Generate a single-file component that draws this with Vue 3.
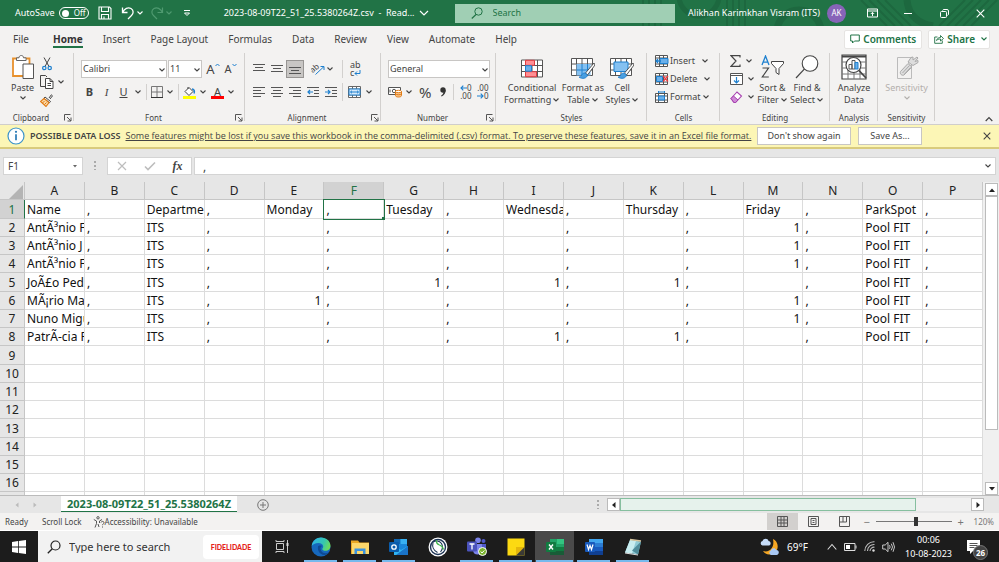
<script setup>
import { h } from 'vue'

const lines = (rows) => rows.map(([x1, x2, y]) => `<path d="M${x1} ${y}.5H${x2}" stroke="#555"/>`).join('')
const chevron = (color) => `<path d="M1.500 2.500 4 5l2.500-2.500" fill="none" stroke="${color}" stroke-width="1.100"/>`
const gridLines = '<path d="M.5.5h21v17H.5zM.5 6h21M.5 12h21M5.500.5v17M11 .5v17M16.500.5v17" fill="#fff" stroke="#555"/>'
const brush = '<path d="M23 5 14.500 15l2 2L24 7z" fill="#fff" stroke="#444" stroke-width=".9"/><path d="M14 15c-2 0-3 1-3.500 2.500-.4 1-1.500 1.500-2.500 1.500 3 2.500 8 1.500 8.500-2z" fill="#4a9fe0" stroke="#1979ca" stroke-width=".8"/>'

const icons = {
  chev: [8, 8, chevron('#444')],
  chevW: [8, 8, chevron('#fff')],
  chevDim: [8, 8, chevron('#4f9a70')],
  chevG: [8, 8, chevron('#217346')],
  chevOff: [8, 8, chevron('#b3b0ad')],
  save: [14, 14, '<path d="M1 1h10.500L13 2.500V13H1z M3.500 1v4.500h7V1 M3.500 13V8.500h7V13 M6 10.500V13" fill="none" stroke="#fff" stroke-width="1.100"/>'],
  undo: [14, 14, '<path d="M1.500 1.500v5h5M1.500 6.500C3.500 2.500 7 .8 10 2.500c3 1.800 2.500 5 .5 7L7 13" fill="none" stroke="#fff" stroke-width="1.300"/>'],
  redo: [14, 14, '<path d="M12.500 1.500v5h-5M12.500 6.500C10.500 2.500 7 .8 4 2.500c-3 1.800-2.500 5-.5 7L7 13" fill="none" stroke="#4f9a70" stroke-width="1.200"/>'],
  chevBig: [10, 10, '<path d="M1 3l4 4 4-4" fill="none" stroke="#fff" stroke-width="1.200"/>'],
  more: [8, 8, '<path d="M1 1.500h6M1.500 4 4 6.500 6.500 4z" fill="none" stroke="#fff"/>'],
  lens: [12, 12, '<circle cx="7.500" cy="4.500" r="3.700" fill="none" stroke="#217346"/><path d="M5 7.500.8 11.500" stroke="#217346" stroke-width="1.200"/>'],
  ribbonOpt: [11, 10, '<path d="M.5 1h10v8H.5zM.5 3h10M5.500 8V4.500M3.800 6l1.700-1.700L7.200 6" fill="none" stroke="#fff"/>'],
  min: [8, 8, '<path d="M0 4.500h8" stroke="#fff"/>'],
  restore: [9, 9, '<rect x=".5" y="2.500" width="6" height="6" rx="1" fill="none" stroke="#fff"/><path d="M2.500 1.500Q3 .5 4 .5h3Q8.500.5 8.500 2v3q0 1-1 1.500" fill="none" stroke="#fff"/>'],
  close: [9, 9, '<path d="M.7.7l7.600 7.600M8.300.7.7 8.300" stroke="#fff" stroke-width="1.100"/>'],
  comment: [10, 10, '<path d="M.7 1h8.600v6H4.500L2.500 9V7H.7z" fill="none" stroke="#217346"/>'],
  share: [10, 10, '<path d="M3.500 3H.7v6.300h7.600V6.500M2.500 6.500C3 4.500 4.500 3.500 6.500 3.500V1.500l3 3-3 2.500V5C4.500 5 3.500 5.500 2.500 6.500z" fill="none" stroke="#217346" stroke-width=".9"/>'],
  paste: [22, 24, '<path d="M1 3.500h16.500V21H1z" fill="#fff" stroke="#e8912d" stroke-width="1.800"/><path d="M4.500 5.500V2.800H7C7 1.300 8 .5 9.300.5s2.200.8 2.200 2.300h2.600v2.700z" fill="#fff" stroke="#666"/><path d="M11 9h10.500v14.500H11z" fill="#fff" stroke="#555"/>'],
  cut: [10, 14, '<path d="M2 .5l5 9M8 .5l-5 9" stroke="#444" fill="none"/><circle cx="2.300" cy="11" r="1.700" fill="none" stroke="#1e80cf" stroke-width="1.200"/><circle cx="7.700" cy="11" r="1.700" fill="none" stroke="#1e80cf" stroke-width="1.200"/>'],
  copy: [14, 14, '<path d="M5 11.500H.5V.5h5L7 2" fill="none" stroke="#444"/><path d="M5.500 3.500h4.500l3 3v7H5.500zM10 3.500v3h3M7.500 8.500h3.500M7.500 10.500h3.500" fill="#fff" stroke="#444"/>'],
  painter: [13, 13, '<path d="M9 4 11.300.8l1.200 1L10 5" fill="#fff" stroke="#444"/><path d="M5 3l5.500 4.500-1 1.200L4 4.300z" fill="#fff" stroke="#444"/><path d="M4 4.500.5 7.500l5.500 5 3-4z" fill="#fbd9a5" stroke="#e07b16" stroke-width="1.100"/><path d="M2.500 8.500l2-1M4.500 10.500l2-2" stroke="#e07b16"/>'],
  launcher: [8, 8, '<path d="M.5 6.500v-6h6M3 3l4 4M7 3.500V7H3.500" fill="none" stroke="#555"/>'],
  borders: [12, 12, '<path d="M.5.5h11v11H.5zM6 .5v11M.5 6h11" fill="none" stroke="#777"/><path d="M0 11.500h12" stroke="#333"/>'],
  fill: [13, 13, '<path d="M2 5.500 6 1.500l4 4-4 4z" fill="#fff" stroke="#444"/><path d="M5 3V1" stroke="#444"/><path d="M9 3c2 0 3 2 2 4.500" fill="none" stroke="#1e80cf" stroke-width="1.500"/><path d="M0 10h13v3H0z" fill="#ff0"/>'],
  alignTop: [12, 12, lines([[0, 12, 1], [2, 10, 4], [0, 12, 7]])],
  alignMid: [12, 12, lines([[0, 12, 2], [2, 10, 5], [0, 12, 8]])],
  alignBot: [12, 12, lines([[0, 12, 4], [2, 10, 7], [0, 12, 10]])],
  left: [12, 12, lines([[0, 12, 1], [0, 8, 4], [0, 12, 7], [0, 8, 10]])],
  center: [12, 12, lines([[0, 12, 1], [2, 10, 4], [0, 12, 7], [2, 10, 10]])],
  right: [12, 12, lines([[0, 12, 1], [4, 12, 4], [0, 12, 7], [4, 12, 10]])],
  outdent: [12, 12, lines([[0, 12, 1], [7, 12, 4], [7, 12, 7], [0, 12, 10]]) + '<path d="M6 6H1M3 4 1 6l2 2" fill="none" stroke="#1e80cf" stroke-width="1.200"/>'],
  indent: [12, 12, lines([[0, 12, 1], [7, 12, 4], [7, 12, 7], [0, 12, 10]]) + '<path d="M0 6h5M3 4l2 2-2 2" fill="none" stroke="#1e80cf" stroke-width="1.200"/>'],
  merge: [13, 12, '<path d="M.5.5h12v11H.5zM.5 3h12M.5 9h12M4.500.5V3M8.500.5V3M4.500 9v2.500M8.500 9v2.500" fill="#fff" stroke="#666"/><path d="M1 3h11v6H1z" fill="#d6eafa" stroke="#1e80cf"/><path d="M2.500 6h8M4 4.700 2.500 6 4 7.300M9 4.700 10.500 6 9 7.300" fill="none" stroke="#1e80cf"/>'],
  currency: [15, 12, '<path d="M.5 1.500h12v7H.5z" fill="#fff" stroke="#555"/><circle cx="6" cy="5" r="1.700" fill="none" stroke="#555"/><path d="M2 3.500v3" stroke="#555"/><path d="M7.500 5.500v4c0 2 6 2 6 0v-4z" fill="#f9c58c" stroke="#e07b16"/><ellipse cx="10.500" cy="5.500" rx="3" ry="1.200" fill="#fff" stroke="#e07b16"/><path d="M7.500 8c1 1 5 1 6 0" fill="none" stroke="#e07b16"/>'],
  comma: [8, 10, '<circle cx="4" cy="3" r="2.700" fill="#333"/><path d="M6.700 3c0 3-1.200 5-4 6.500L2 8.800C4 7.500 4.500 6 4.500 4z" fill="#333"/>'],
  arrowL: [7, 6, '<path d="M7 3H1M3.300.7 1 3l2.300 2.300" fill="none" stroke="#1e80cf" stroke-width="1.100"/>'],
  arrowR: [7, 6, '<path d="M0 3h6M3.700.7 6 3 3.700 5.300" fill="none" stroke="#1e80cf" stroke-width="1.100"/>'],
  condFormat: [22, 18, gridLines + '<path d="M4.500.8h9v5h-9zM4.500 12.200h11v5h-11z" fill="#ff8f94" stroke="#e23b40"/><path d="M4.500 6.200h6v5.500h-6z" fill="#6bb0ea" stroke="#1e80cf"/>'],
  formatTable: [24, 21, gridLines + '<path d="M5.500 6h14v11.500h-14z" fill="#85c1f1"/><path d="M5.500 12h14M11 6v11.500M16.500 6v11.500" stroke="#1e80cf"/>' + brush],
  cellStyles: [24, 21, gridLines + '<path d="M4 4h14v9.500H4z" fill="#85c1f1" stroke="#1e80cf"/>' + brush],
  insert: [14, 12, '<path d="M.5.5h12v11H.5zM4.500.5v11M8.500.5v11M.5 3h12M.5 9h12" fill="#fff" stroke="#555"/><path d="M5 3.500h8v5H5z" fill="#6bb0ea" stroke="#1e80cf"/><path d="M6 6H1M3 4 1 6l2 2" fill="none" stroke="#1e80cf" stroke-width="1.300"/>'],
  delete: [14, 12, '<path d="M.5.5h12v11H.5zM4.500.5v11M8.500.5v11M.5 3h12M.5 9h12" fill="#fff" stroke="#555"/><path d="M1.500 3.500h6v5h-6z" fill="#6bb0ea" stroke="#1e80cf"/><path d="M8 3l5 5.500M13 3 8 8.500" stroke="#f04045" stroke-width="1.300"/>'],
  format: [14, 12, '<path d="M.5 2.500h12v9H.5zM3.500 2.500v9M9.500 2.500v9M.5 5h12M.5 9h12" fill="#fff" stroke="#555"/><path d="M3.500 5h6v4h-6z" fill="#6bb0ea" stroke="#1e80cf"/><path d="M3.500 1h6M3.500 0v2M9.500 0v2" stroke="#1e80cf"/>'],
  sum: [11, 12, '<path d="M10 2.500V.7H1L6 6l-5 5.300h9V9.500" fill="none" stroke="#444" stroke-width="1.200"/>'],
  fillDown: [13, 12, '<path d="M.5.500h12v11H.5zM.5 2.500h12" fill="#fff" stroke="#555"/><path d="M6.500 4v6M4 7.500 6.500 10 9 7.500" fill="none" stroke="#1e80cf" stroke-width="1.200"/>'],
  clear: [13, 12, '<path d="M1 7.500 7 1l4.500 4-6 6.500H4z" fill="#fff" stroke="#a742b0" stroke-width="1.100"/><path d="M1 7.500 3.500 5 8 9l-2.500 2.500H4z" fill="#cf8ad6" stroke="#a742b0"/>'],
  sort: [24, 24, '<path d="M1 10 4.500 1 8 10M2.200 7.200h4.600" fill="none" stroke="#1e80cf" stroke-width="1.300"/><path d="M1.500 13h6L1.300 22h6.500" fill="none" stroke="#444" stroke-width="1.200"/><path d="M10.500 6.500h12v2l-4.500 5v6l-3-2v-4l-4.500-5z" fill="#fff" stroke="#444"/>'],
  find: [24, 24, '<circle cx="15" cy="8.500" r="7.800" fill="#fff" stroke="#444" stroke-width="1.100"/><path d="M9.300 14.200 1 23" stroke="#444" stroke-width="1.200"/>'],
  analyze: [26, 26, '<path d="M1 1h24v24H1z" fill="#fff" stroke="#444" stroke-width="1.200"/><path d="M1 2.500h24" stroke="#444" stroke-width="2"/><path d="M1 8h24M1 14h24M1 20h24M7 14v11M13 14v11M19 14v11" stroke="#777"/><circle cx="12.500" cy="11" r="7.500" fill="#fff" stroke="#444" stroke-width="1.200"/><path d="M18 16.500 25 24" stroke="#444" stroke-width="1.800"/><path d="M8 10.500h3v4.500H8zM11 6.500h3V15h-3z" fill="#fff" stroke="#555"/><path d="M14 8.500h3V15h-3z" fill="#6bb0ea" stroke="#1e80cf"/>'],
  sensitivity: [24, 26, '<path d="M2.500 3.500h14V24.500h-14z" fill="#f3f2f1" stroke="#bbb"/><path d="M5.500 17.500 13 9.500l4 3.500-8 8c-2 1-4.500-1-3.500-3.500z" fill="#ddd" stroke="#aaa"/><path d="M7.500 19l7-7.500M9.500 20l6-6.500" stroke="#aaa"/><path d="M13 8l3-4.500 2-.5V6l4-3 1 1-3 3.500 3-1v2l-5 3z" fill="#ddd" stroke="#aaa"/>'],
  collapse: [8, 6, '<path d="M.7 5 4 1.500 7.300 5" fill="none" stroke="#444" stroke-width="1.200"/>'],
  info: [18, 18, '<circle cx="9" cy="9" r="8" fill="#fff" stroke="#3c93c9" stroke-width="1.200"/><circle cx="9" cy="4.800" r="1.100" fill="#2a7ab5"/><path d="M9 7.200v6" stroke="#2a7ab5" stroke-width="1.700"/>'],
  closeDark: [8, 8, '<path d="M.7.7l6.600 6.600M7.300.7.7 7.300" stroke="#444" stroke-width="1.100"/>'],
  cancel: [10, 10, '<path d="M1 1l8 8M9 1 1 9" stroke="#bdbdbd" stroke-width="1.200"/>'],
  accept: [12, 10, '<path d="M1 5.500 4 8.500 11 1.500" fill="none" stroke="#bdbdbd" stroke-width="1.600"/>'],
  caret: [6, 6, '<path d="M1 2h4L3 4.500z" fill="#666"/>'],
  corner: [14, 14, '<path d="M14 0v14H0z" fill="#b4b4b4"/>'],
  navL: [6, 6, '<path d="M4.500.5v5L1.500 3z" fill="#bbb"/>'],
  navR: [6, 6, '<path d="M1.500.5v5L4.500 3z" fill="#bbb"/>'],
  add: [12, 12, '<circle cx="6" cy="6" r="5.300" fill="none" stroke="#777"/><path d="M6 3v6M3 6h6" stroke="#777"/>'],
  up: [8, 6, '<path d="M1 5h6L4 1.500z" fill="#222"/>'],
  down: [8, 6, '<path d="M1 1h6L4 4.500z" fill="#222"/>'],
  triL: [6, 8, '<path d="M4.500 1v6L1 4z" fill="#222"/>'],
  triR: [6, 8, '<path d="M1.500 1v6L5 4z" fill="#222"/>'],
  access: [12, 12, '<circle cx="5" cy="1.800" r="1.200" fill="none" stroke="#555"/><path d="M.8 3.500 3.500 5v2.500L2 11.500M9 3.500 6.500 5v2M5 8l1 3" fill="none" stroke="#555"/><path d="M8 6.500c.3-1.500 3-1.500 3 .2 0 1.200-1.500 1.200-1.500 2.500M9.500 10.500v1" fill="none" stroke="#555"/>'],
  normal: [11, 11, '<path d="M.5.500h10v10H.5zM4 .5v10M7 .5v10M.5 4h10M.5 7h10" fill="none" stroke="#555"/>'],
  layout: [11, 11, '<path d="M.5.500h10v10H.5zM3 2.500h5v6H3zM4.500 4.500h2M4.500 6.500h2" fill="none" stroke="#555"/>'],
  breaks: [11, 11, '<path d="M.5 10.500V.5h10v10zM4 .5v5.500M7.500.5V6H.5" fill="none" stroke="#555"/>'],
  windows: [14, 14, '<path d="M0 2l6-.9v5.500H0zM6.800 1 14 0v6.600H6.800zM0 7.400h6V13L0 12zM6.800 7.400H14V14l-7.200-1z" fill="#fff"/>'],
  lensDark: [14, 14, '<circle cx="8.500" cy="5.500" r="4.500" fill="none" stroke="#222" stroke-width="1.200"/><path d="M5.300 8.700.8 13.200" stroke="#222" stroke-width="1.300"/>'],
  taskview: [14, 13, '<path d="M1.500 3.500h7v6h-7zM1 0v1.500h8V0M1 13v-1.500h8V13M12.500 0v3M12.500 6v7" fill="none" stroke="#ccc"/><path d="M11.500 3h2v3h-2z" fill="#ddd"/>'],
  edge: [20, 20, '<defs><linearGradient id="eg" x1="0" x2="1" y1=".3" y2=".6"><stop offset="0" stop-color="#2fb4e8"/><stop offset=".6" stop-color="#35c6b0"/><stop offset="1" stop-color="#6fdc55"/></linearGradient></defs><circle cx="10" cy="10" r="9.500" fill="#1668bd"/><path d="M.6 9C1.500 3.500 5.500.5 10 .5c5.500 0 9.500 4 9.500 8.300 0 3-2.200 5-5 5-2 0-3.200-.8-3.200-1.800 0-.8.900-1 .9-2.500C12.200 7.500 10 6 7.500 6 4 6 1.500 7.500.6 9z" fill="url(#eg)"/><path d="M7 9.500C6.300 14 9 17.500 13 18c2 .2 4-1 5-2.500-3.500 1.500-8 .5-8.500-3.500-.2-1.500.5-2.500 1.500-3-1.500-.8-3.500-.5-4 .5z" fill="#0e4a94"/>'],
  explorer: [18, 16, '<path d="M0 1.500h7l1.500 2H18V15H0z" fill="#e9a825"/><path d="M1 4h17v11H1z" fill="#fbd76b"/><path d="M3.500 15V9.500h11V15H12v-3H6v3z" fill="#3c93dd"/>'],
  outlook: [20, 18, '<path d="M5 1h13v14H5z" fill="#1a86d8"/><path d="M5 1h6.500v5H5z" fill="#1068b4"/><path d="M11.500 1H18v5h-6.500z" fill="#38b0f0"/><path d="M5 8l7 4 7-4v9H5z" fill="#30b4f2"/><path d="M19 8v9H7z" fill="#1a74c8"/><rect y="4" width="10" height="10" rx="1" fill="#0a5cab"/><circle cx="5" cy="9" r="2.200" fill="none" stroke="#fff" stroke-width="1.300"/>'],
  coin: [20, 20, '<circle cx="10" cy="10" r="9.500" fill="#fff"/><circle cx="10" cy="10" r="7.500" fill="none" stroke="#1c3455" stroke-width="1.400"/><path d="M5 5.500C7 3 11.500 3.500 13.500 6.500c1.500 2.500 1 6-1 8.500M5 6c-1 3.500.5 7.500 4.500 9.500" fill="none" stroke="#1c3455" stroke-width="1.100"/><path d="M8.500 3c-.5 2.500.5 4 3 5 2.500.8 3.500 2.500 4 4.500" fill="none" stroke="#3fb54a" stroke-width="1.200"/>'],
  teams: [20, 19, '<circle cx="11" cy="3.200" r="2.800" fill="#7b83eb"/><circle cx="16.500" cy="4" r="2" fill="#5059c9"/><path d="M13 7h6v5c0 2-2 3.500-4 3z" fill="#5059c9"/><path d="M6 7h9v6c0 3-2 4.500-4.500 4.500S6 16 6 13z" fill="#7b83eb"/><rect y="4.500" width="10" height="10" rx="1" fill="#4b53bc"/><path d="M2.500 7h5M5 7v5.500" stroke="#fff" stroke-width="1.300"/><circle cx="15.500" cy="14.500" r="4" fill="#7bb32e" stroke="#fff"/><path d="M13.700 14.500 15 16l2.300-2.500" fill="none" stroke="#fff"/>'],
  sticky: [18, 18, '<path d="M.5.5h17v17H.5z" fill="#fcd912"/><path d="M9 17.500V9h8.500z" fill="#e5b70b"/><path d="M17.500 9v8.500H9z" fill="#3b3a35"/>'],
  excel: [18, 18, '<path d="M4 1h14v16H4z" fill="#21a366"/><path d="M11 1h7v5h-7z" fill="#33c481"/><path d="M4 9h14v8H4z" fill="#107c41"/><path d="M4 13h14v4H4z" fill="#185c37"/><rect y="4" width="10" height="10" rx="1" fill="#107c41"/><path d="M3 6.500 7 11.500M7 6.500 3 11.500" stroke="#fff" stroke-width="1.400"/>'],
  word: [18, 18, '<path d="M4 1h14v4.500H4z" fill="#41a5ee"/><path d="M4 5h14v4H4z" fill="#2b7cd3"/><path d="M4 9h14v4H4z" fill="#185abd"/><path d="M4 13h14v4H4z" fill="#103f91"/><rect y="4" width="10" height="10" rx="1" fill="#185abd"/><path d="M2 6.500 3.500 11.500 5 7.500l1.500 4L8 6.500" fill="none" stroke="#fff" stroke-width="1.200"/>'],
  notepad: [20, 18, '<path d="M7 2 18 3.500 15 16.500 2 14.500z" fill="#8fcbd6"/><path d="M7 2l6 .8L9 15.500l-7-1z" fill="#c8edf0"/><path d="M15 16.500 18 3.500l-9 9z" fill="#4f8c9a"/><path d="M7 1.500l11 1.500" stroke="#d9c7a0" stroke-width="1.500"/><path d="M2 15l13 2" stroke="#ddd"/>'],
  weather: [20, 18, '<path d="M13 1c5 2 6 9 3 12-3 4-10 5-13 0 6 2 12-3 10-12z" fill="#f6a723"/><path d="M2.500 7.500a2.300 2.300 0 010-4.500C3.500 0 8 0 8.500 3c2.500 0 3 4 .5 4.500z" fill="#c5dcf9"/><path d="M11 17a2.500 2.500 0 010-4.700c.5-2.800 4.500-2.800 5.200-.3 3.300-.2 3.600 4.600.3 5z" fill="#a9c9f5"/>'],
  trayUp: [10, 8, '<path d="M.7 6.500 5 1.500l4.300 5" fill="none" stroke="#ddd" stroke-width="1.100"/>'],
  battery: [13, 8, '<path d="M.5.500h10.500v7H.5zM12 2.500v3" fill="none" stroke="#ddd"/><path d="M2 2h4v4H2z" fill="#fff"/>'],
  wifi: [11, 11, '<path d="M.8 10A9.200 9.200 0 0110.500.8M3.500 10A6.500 6.500 0 0110.500 3.500M6 10A4 4 0 0110.500 6.200" fill="none" stroke="#bbb" stroke-width="1.100"/><circle cx="9.500" cy="9.500" r="1.200" fill="#ddd"/>'],
  sound: [13, 12, '<path d="M.7 4h2.500L6 1.300v9.400L3.200 8H.7zM7.500 4.200q1.300 1.800 0 3.600M9.300 2.700q2.400 3.300 0 6.600M11 1.200q3 4.800 0 9.600" fill="none" stroke="#ddd" stroke-width=".9"/>'],
  notes: [14, 14, '<path d="M0 0h13v11H6l-3 3v-3H0z" fill="#fff"/><path d="M2.500 3.500h8M2.500 5.500h8M2.500 7.500h5" stroke="#555"/>'],
}

const Icon = ({ name }) => {
  const [w, ht, body] = icons[name]
  return h('svg', { width: w, height: ht, viewBox: `0 0 ${w} ${ht}`, 'aria-hidden': 'true', innerHTML: body })
}
Icon.props = ['name']

const tabs = ['File', 'Home', 'Insert', 'Page Layout', 'Formulas', 'Data', 'Review', 'View', 'Automate', 'Help']
const columns = 'ABCDEFGHIJKLMNOP'.split('')
const header = { A: 'Name', C: 'Departmen', E: 'Monday', G: 'Tuesday', I: 'Wednesda', K: 'Thursday', M: 'Friday', O: 'ParkSpot' }
const people = [
  ['AntÃ³nio F', 'M'], ['AntÃ³nio J', 'M'], ['AntÃ³nio F', 'M'], ['JoÃ£o Ped', 'GIK'],
  ['MÃ¡rio Ma', 'EM'], ['Nuno Migu', 'M'], ['PatrÃ-cia F', 'IK'],
]

const rows = Array.from({ length: 17 }, (_, i) => {
  const person = people[i - 1]
  return columns.map((c, ci) => {
    if (i > 7) return ''
    if (ci % 2) return ','
    if (i === 0) return header[c]
    if (c === 'A') return person[0]
    if (c === 'C') return 'ITS'
    if (c === 'O') return 'Pool FIT'
    return person[1].includes(c) ? '1' : ''
  })
})

const apps = [
  ['edge', 'Edge', true], ['explorer', 'File Explorer', true], ['outlook', 'Outlook', true], ['coin', 'Client', false],
  ['teams', 'Teams', true], ['sticky', 'Sticky Notes', true], ['excel', 'Excel', true], ['word', 'Word', true], ['notepad', 'Notepad', true],
]
</script>

<template>
  <div class="window">
    <header class="titlebar">
      <svg class="pattern" viewBox="0 0 360 26" width="360" height="26" aria-hidden="true">
        <g stroke="#1d683f" stroke-width="2" fill="none">
          <path d="M4 0v26M10 0v26M16 0v26M22 0v26M88 0v26M94 0v26M100 0v26M106 0v26" />
          <path d="M222 0l26 26M230 0l26 26M238 0l26 26M246 0l26 26M300 26l26-26M308 26l26-26M316 26l26-26M324 26l26-26M332 26l26-26" />
          <circle cx="160" cy="32" r="22" stroke-width="7" /><circle cx="60" cy="-4" r="20" stroke-width="5" />
          <path d="M268 0q2 22 26 26" stroke-width="7" />
        </g>
      </svg>
      <span class="autosave">AutoSave</span>
      <button class="toggle" aria-label="AutoSave off"><i></i>Off</button>
      <button class="t-save" aria-label="Save"><Icon name="save" /></button>
      <button class="t-undo" aria-label="Undo"><Icon name="undo" /><Icon name="chevW" /></button>
      <button class="t-redo" aria-label="Redo"><Icon name="redo" /><Icon name="chevDim" /></button>
      <button class="t-more" aria-label="Customize toolbar"><Icon name="more" /></button>
      <span class="doc">2023-08-09T22_51_25.5380264Z.csv &nbsp;-&nbsp; Read...</span>
      <Icon name="chevBig" />
      <label class="search"><Icon name="lens" /><input type="search" placeholder="Search" aria-label="Search" /></label>
      <div class="account">
        <span>Alikhan Karimkhan Visram (ITS)</span><span class="avatar">AK</span>
      </div>
      <div class="wincontrols">
        <button aria-label="Ribbon display options"><Icon name="ribbonOpt" /></button>
        <button aria-label="Minimize"><Icon name="min" /></button>
        <button aria-label="Restore"><Icon name="restore" /></button>
        <button aria-label="Close"><Icon name="close" /></button>
      </div>
    </header>

    <nav class="tabs">
      <button v-for="t in tabs" :key="t" :class="{ active: t === 'Home' }">{{ t }}</button>
      <div class="tabactions">
        <button><Icon name="comment" />Comments</button>
        <button><Icon name="share" />Share<Icon name="chevG" class="sharechev" /></button>
      </div>
    </nav>

    <section class="ribbon">
      <div class="group clipboard">
        <div class="body">
          <button class="big"><Icon name="paste" /><span>Paste</span><Icon name="chev" /></button>
          <div class="stack">
            <button class="cut" aria-label="Cut"><Icon name="cut" /></button>
            <button aria-label="Copy"><Icon name="copy" /><Icon name="chev" /></button>
            <button aria-label="Format painter"><Icon name="painter" /></button>
          </div>
        </div>
        <footer>Clipboard<Icon name="launcher" class="launcher" /></footer>
      </div>

      <div class="group font">
        <div class="body two">
          <div class="line">
            <div class="combo name"><select aria-label="Font"><option>Calibri</option></select><Icon name="chev" /></div>
            <div class="combo size"><select aria-label="Font size"><option>11</option></select><Icon name="chev" /></div>
            <button class="grow" aria-label="Increase font size">A<svg width="5" height="4" viewBox="0 0 5 4"><path d="M.5 3 2.500 1l2 2" fill="none" stroke="#1e80cf" /></svg></button>
            <button class="grow small" aria-label="Decrease font size">A<svg width="5" height="4" viewBox="0 0 5 4"><path d="M.5 1 2.500 3l2-2" fill="none" stroke="#1e80cf" /></svg></button>
          </div>
          <div class="line fmt">
            <button class="ltr"><b>B</b></button><button class="ltr"><i>I</i></button>
            <button class="ltr"><u>U</u></button><Icon name="chev" class="lead" /><hr />
            <button aria-label="Borders"><Icon name="borders" /><Icon name="chev" /></button><hr />
            <button aria-label="Fill color"><Icon name="fill" /><Icon name="chev" /></button>
            <button aria-label="Font color"><span class="fontcolor">A</span><Icon name="chev" /></button>
          </div>
        </div>
        <footer>Font<Icon name="launcher" class="launcher" /></footer>
      </div>

      <div class="group align">
        <div class="body aligngrid">
          <button aria-label="Top align"><Icon name="alignTop" /></button>
          <button aria-label="Middle align"><Icon name="alignMid" /></button>
          <button class="on" aria-label="Bottom align"><Icon name="alignBot" /></button>
          <button class="orient" aria-label="Orientation"><svg width="14" height="12" viewBox="0 0 14 12"><text x="0" y="8" font-size="8" transform="rotate(-40 4 7)" fill="#444">ab</text><path d="M4.500 11.500 13 3.500M9.500 3.500H13V7" fill="none" stroke="#1e80cf" /></svg><Icon name="chev" /></button>
          <button class="last wrap" aria-label="Wrap text">ab<br />c<svg width="7" height="6" viewBox="0 0 7 6"><path d="M6 0v3.500H1M3 1.500l-2 2 2 2" fill="none" stroke="#1e80cf" /></svg></button>
          <button aria-label="Left"><Icon name="left" /></button>
          <button aria-label="Center"><Icon name="center" /></button>
          <button aria-label="Right"><Icon name="right" /></button>
          <button aria-label="Outdent"><Icon name="outdent" /></button>
          <button aria-label="Indent"><Icon name="indent" /></button>
          <button class="last" aria-label="Merge and center"><Icon name="merge" /><Icon name="chev" /></button>
        </div>
        <footer>Alignment<Icon name="launcher" class="launcher" /></footer>
      </div>

      <div class="group number">
        <div class="body two">
          <div class="line"><div class="combo fmtname"><select aria-label="Number format"><option>General</option></select><Icon name="chev" /></div></div>
          <div class="line num">
            <button aria-label="Accounting format"><Icon name="currency" /><Icon name="chev" /></button>
            <button class="pct">%</button>
            <button aria-label="Comma style"><Icon name="comma" /></button><hr />
            <button class="dec" aria-label="Increase decimal"><span><Icon name="arrowL" />0</span><span>.00</span></button>
            <button class="dec" aria-label="Decrease decimal"><span>.00</span><span><Icon name="arrowR" />0</span></button>
          </div>
        </div>
        <footer>Number<Icon name="launcher" class="launcher" /></footer>
      </div>

      <div class="group styles">
        <div class="body bigs">
          <button class="big"><Icon name="condFormat" /><span>Conditional</span><span>Formatting<Icon name="chev" /></span></button>
          <button class="big"><Icon name="formatTable" /><span>Format as</span><span>Table<Icon name="chev" /></span></button>
          <button class="big"><Icon name="cellStyles" /><span>Cell</span><span>Styles<Icon name="chev" /></span></button>
        </div>
        <footer>Styles</footer>
      </div>

      <div class="group cells">
        <div class="body stack">
          <button><Icon name="insert" />Insert<Icon name="chev" class="gap" /></button>
          <button><Icon name="delete" />Delete<Icon name="chev" class="gap" /></button>
          <button><Icon name="format" />Format<Icon name="chev" /></button>
        </div>
        <footer>Cells</footer>
      </div>

      <div class="group editing">
        <div class="body">
          <div class="stack">
            <button aria-label="AutoSum"><Icon name="sum" /><Icon name="chev" /></button>
            <button aria-label="Fill"><Icon name="fillDown" /><Icon name="chev" /></button>
            <button aria-label="Clear"><Icon name="clear" /><Icon name="chev" /></button>
          </div>
          <button class="big"><Icon name="sort" /><span>Sort &amp;</span><span>Filter<Icon name="chev" /></span></button>
          <button class="big"><Icon name="find" /><span>Find &amp;</span><span>Select<Icon name="chev" /></span></button>
        </div>
        <footer>Editing</footer>
      </div>

      <div class="group single">
        <div class="body"><button class="big"><Icon name="analyze" /><span>Analyze</span><span>Data</span></button></div>
        <footer>Analysis</footer>
      </div>
      <div class="group single">
        <div class="body"><button class="big dim"><Icon name="sensitivity" /><span>Sensitivity</span><Icon name="chevOff" /></button></div>
        <footer>Sensitivity</footer>
      </div>
      <div class="tail"><button aria-label="Collapse ribbon"><Icon name="collapse" /></button></div>
    </section>

    <section class="message">
      <Icon name="info" />
      <strong>POSSIBLE DATA LOSS</strong>
      <a href="#">Some features might be lost if you save this workbook in the comma-delimited (.csv) format. To preserve these features, save it in an Excel file format.</a>
      <button class="msgbtn wide">Don't show again</button>
      <button class="msgbtn">Save As...</button>
      <button class="msgclose" aria-label="Close message"><Icon name="closeDark" /></button>
    </section>

    <section class="formula">
      <label class="namebox"><input value="F1" aria-label="Name box" /><Icon name="caret" /></label>
      <span class="dots"></span>
      <div class="fx">
        <button aria-label="Cancel"><Icon name="cancel" /></button>
        <button aria-label="Enter"><Icon name="accept" /></button>
        <button class="fxi" aria-label="Insert function">fx</button>
      </div>
      <label class="fxinput"><input value="," aria-label="Formula" /><Icon name="chev" /></label>
    </section>

    <main class="sheet">
      <div class="viewport">
        <table>
          <thead>
            <tr><th class="corner"><Icon name="corner" /></th><th v-for="c in columns" :key="c" :class="{ sel: c === 'F' }">{{ c }}</th></tr>
          </thead>
          <tbody>
            <tr v-for="(r, i) in rows" :key="i">
              <th :class="{ sel: i === 0 }">{{ i < 16 ? i + 1 : '' }}</th>
              <td v-for="(v, c) in r" :key="c" :class="{ num: v === '1', picked: i === 0 && c === 5 }">{{ v }}</td>
            </tr>
          </tbody>
        </table>
      </div>
      <div class="vscroll">
        <button aria-label="Scroll up"><Icon name="up" /></button>
        <div class="vthumb"></div>
        <div class="vtrack"></div>
        <button aria-label="Scroll down"><Icon name="down" /></button>
      </div>
    </main>

    <section class="sheettabs">
      <button class="nav" aria-label="Previous sheet"><Icon name="navL" /></button>
      <button class="nav" aria-label="Next sheet"><Icon name="navR" /></button>
      <button class="sheettab">2023-08-09T22_51_25.5380264Z</button>
      <button class="addsheet" aria-label="New sheet"><Icon name="add" /></button>
      <span class="dots"></span>
      <div class="hscroll">
        <button aria-label="Scroll left"><Icon name="triL" /></button>
        <div class="hthumb"></div>
        <div class="htrack"></div>
        <button aria-label="Scroll right"><Icon name="triR" /></button>
      </div>
    </section>

    <section class="status">
      <span>Ready</span><span class="lock">Scroll Lock</span><Icon name="access" /><span>Accessibility: Unavailable</span>
      <div class="views">
        <button class="on" aria-label="Normal"><Icon name="normal" /></button>
        <button aria-label="Page layout"><Icon name="layout" /></button>
        <button aria-label="Page break preview"><Icon name="breaks" /></button>
      </div>
      <button class="zb" aria-label="Zoom out">−</button>
      <input class="zoom" type="range" min="0" max="100" value="53" aria-label="Zoom" />
      <button class="zb" aria-label="Zoom in">+</button>
      <span class="pctlabel">120%</span>
    </section>

    <footer class="taskbar">
      <button class="start" aria-label="Start"><Icon name="windows" /></button>
      <label class="tsearch"><Icon name="lensDark" /><input placeholder="Type here to search" aria-label="Type here to search" /><span class="brand">FIDELIDADE</span></label>
      <button class="app" aria-label="Task view"><Icon name="taskview" /></button>
      <button v-for="[n, label, open] in apps" :key="n" class="app" :class="{ open, current: n === 'excel' }" :aria-label="label"><Icon :name="n" /></button>
      <div class="tray">
        <Icon name="weather" /><span class="temp">69°F</span>
        <Icon name="trayUp" /><Icon name="battery" /><Icon name="wifi" /><Icon name="sound" />
        <div class="clock"><span>00:06</span><span>10-08-2023</span></div>
        <button class="notif" aria-label="Notifications"><Icon name="notes" /><b>26</b></button>
      </div>
    </footer>
  </div>
</template>

<style>
body { margin: 0; background: #e6e6e6; }
</style>

<style scoped>
* { box-sizing: border-box; }
.window { height: 100vh; min-width: 960px; display: flex; flex-direction: column; overflow: hidden; font: 10px/12px "Noto Sans", sans-serif; color: #444; }
button { font: inherit; color: inherit; background: none; border: 0; padding: 0; display: flex; align-items: center; justify-content: center; white-space: nowrap; }
input, select { font: inherit; color: inherit; border: 0; background: none; padding: 0; min-width: 0; outline: 0; appearance: none; }
svg { flex: none; display: block; }

.titlebar { position: relative; flex: none; height: 26px; background: #217346; color: #fff; display: flex; align-items: center; font-size: 9px; padding-left: 15px; }
.titlebar > * { position: relative; flex: none; }
.titlebar > .pattern { position: absolute; right: 0; top: 0; }
.toggle { width: 30px; height: 12px; margin-left: 4px; border: 1px solid #fff; border-radius: 6px; font-size: 8px; gap: 5px; }
.toggle i { width: 7px; height: 7px; border-radius: 50%; background: #fff; }
.t-save { margin-left: 9px; }
.t-undo { margin-left: 9px; gap: 1px; }
.t-redo { margin-left: 6px; gap: 1px; }
.t-more { margin-left: 10px; }
.doc { margin-left: 33px; }
.doc + svg { margin-left: 4px; }
.titlebar .search { flex: 1 1 0; max-width: 220px; margin-left: 26px; height: 19px; background: #a0cfb4; display: flex; align-items: center; padding-left: 16px; gap: 10px; }
.search input::placeholder { color: #217346; opacity: 1; }
.titlebar .account { margin-left: auto; display: flex; align-items: center; gap: 7px; }
.avatar { width: 19px; height: 19px; border-radius: 50%; background: #8764b8; display: grid; place-items: center; font-size: 8px; }
.wincontrols { display: flex; width: 153px; padding-left: 8px; }
.wincontrols button { flex: 1; height: 26px; }

.tabs { flex: none; height: 26px; background: #f3f2f1; display: flex; align-items: center; padding: 0 9px 0 13px; gap: 20px; }
.tabs > button { position: relative; height: 26px; }
.tabs > button:first-child { margin-right: 4px; }
.tabs > .active { font-weight: 700; color: #333; }
.tabs > .active::after { content: ""; position: absolute; left: 0; right: 0; bottom: 4px; height: 2px; background: #217346; }
.tabactions { margin-left: auto; display: flex; gap: 6px; }
.tabactions button { height: 19px; padding: 0 5px; gap: 3px; background: #fff; border: 1px solid #e6e4e2; border-radius: 2px; color: #217346; font-weight: 600; }
.tabactions button:last-child { padding-right: 1px; }
.tabactions .sharechev { margin-left: 2px; }

.ribbon { flex: none; height: 73px; background: #f3f2f1; border-bottom: 1px solid #d0cecc; display: grid; grid-template-columns: 74fr 171fr 136fr 115fr 151fr 73fr 110fr 48fr 57fr 64fr; }
.group { min-width: 0; position: relative; display: flex; flex-direction: column; }
.group::after { content: ""; position: absolute; right: 0; top: 1px; bottom: 3px; width: 1px; background: #d2d0ce; }
.body { flex: 1; display: flex; min-height: 0; }
.group footer { position: relative; height: 12px; font-size: 8px; text-align: center; padding-right: 12px; }
.launcher { position: absolute; right: 2px; top: 2px; }
.styles footer, .cells footer, .editing footer, .single footer { padding-right: 0; }
.big { flex-direction: column; justify-content: flex-start; font-size: 9px; }
.big > svg:first-child { margin-bottom: 3px; }
.big span { display: flex; align-items: center; height: 12px; gap: 1px; }
.stack { display: flex; flex-direction: column; }
.stack button { height: 18px; justify-content: flex-start; gap: 3px; }
.clipboard .body { padding: 3px 0 0 11px; gap: 6px; }
.stack .cut { padding-left: 2px; }
.two { flex-direction: column; padding: 8px 6px 0 7px; gap: 5px; }
.line { display: flex; align-items: center; height: 18px; }
.combo { position: relative; height: 18px; background: #fff; border: 1px solid #c8c6c4; display: flex; }
.combo select { flex: 1; padding-left: 1px; font-size: 9px; }
.combo svg { position: absolute; right: 0; top: 5px; pointer-events: none; }
.name { flex: 87; margin-right: 1px; }
.size { flex: 33; margin-right: 2px; }
.grow { font-size: 13px; width: 18px; align-items: flex-start; }
.grow.small { font-size: 11px; width: 17px; }
.fmt { font-size: 11px; }
.ltr { width: 17px; }
.ltr i { font-family: "Liberation Serif", serif; }
.fmt .lead { margin-left: 2px; }
hr { width: 1px; height: 16px; border: 0; margin: 0 4px; background: #d2d0ce; }
.fmt button { gap: 3px; }
.fmt button + button:last-child { margin-left: 4px; }
.fontcolor { width: 13px; height: 13px; line-height: 11px; border-bottom: 3px solid #f00; text-align: center; }
.aligngrid { display: grid; grid-template-columns: repeat(5, 18px) 1fr; grid-template-rows: 18px 18px; row-gap: 5px; padding: 8px 0 0 5px; align-content: start; }
.aligngrid .on { background: #c8c6c4; border: 1px solid #979593; }
.orient { grid-column: 4 / 6; gap: 1px; }
.last { border-left: 1px solid #d2d0ce; margin-left: 2px; padding-left: 5px; justify-content: flex-start; gap: 4px; }
.last.wrap { display: block; text-align: left; font-size: 9px; line-height: 8px; padding-left: 7px; }
.wrap svg { display: inline-block; }
.fmtname { flex: 1; }
.num button { gap: 2px; }
.line .pct { font-size: 15px; margin-left: 6px; margin-right: 8px; }
.num hr { margin: 0 3px 0 6px; }
.dec { flex-direction: column; font-size: 8px; line-height: 8px; width: 14px; }
.num .dec { align-items: flex-end; gap: 0; }
.dec span { display: flex; align-items: center; }
.dec + .dec { margin-left: 3px; }
.bigs { padding: 6px 8px 0; justify-content: space-between; }
.bigs .big > svg:first-child { height: 21px; margin-bottom: 3px; }
.cells .body { padding: 0 0 0 8px; font-size: 9px; }
.cells .stack button { gap: 1px; }
.cells .gap { margin-left: 5px; }
.editing .body { padding: 0 6px 0 10px; justify-content: space-between; }
.editing .stack button { gap: 4px; }
.editing .big { padding-top: 3px; }
.single .body { justify-content: center; }
.single .big { padding-top: 2px; }
.single .big > svg:first-child { margin-bottom: 2px; }
.dim { color: #b3b0ad; }
.tail { display: flex; align-items: flex-end; justify-content: flex-end; padding: 0 6px 2px 0; }

.message { flex: none; height: 24px; background: #fcf6b6; border-bottom: 2px solid #d9cb7d; display: flex; align-items: center; padding: 0 8px 0 7px; font-size: 9px; }
.message strong { margin-left: 5px; font-weight: 600; white-space: nowrap; }
.message a { flex: 1; margin-left: 5px; color: #444; font-family: "Open Sans", sans-serif; white-space: nowrap; }
.msgbtn { height: 18px; width: 64px; margin-left: 7px; background: #fff; border: 1px solid #c8c6c4; }
.msgbtn.wide { width: 94px; margin-left: 2px; }
.msgclose { margin-left: 61px; }

.formula { flex: none; height: 33px; background: #e6e6e6; display: flex; align-items: flex-start; padding: 8px 3px 0; font-size: 10px; }
.formula label, .fx { height: 18px; background: #fff; border: 1px solid #d4d4d4; display: flex; align-items: center; }
.namebox { width: 80px; padding: 0 4px; }
.namebox input, .fxinput input { flex: 1; }
.dots { width: 2px; height: 9px; margin: 4px 11px 0; background: repeating-linear-gradient(#aaa 0 2px, transparent 2px 4px); }
.fx { width: 85px; justify-content: space-around; }
.fxi { font: italic 700 12px "Liberation Serif", serif; }
.fxinput { flex: 1; margin-left: 2px; padding: 0 3px 0 8px; }
.fxinput input { font-size: 12px; }

.sheet { flex: 1; min-height: 0; display: flex; background: #e6e6e6; }
.viewport { flex: 1; min-width: 0; overflow: hidden; }
table { width: 100%; table-layout: fixed; border-collapse: separate; border-spacing: 0; font: 12px/16px "Noto Sans", sans-serif; color: #111; background: #fff; }
th { font-weight: 400; text-align: center; padding: 1px 0 0; height: 18px; background: #e6e6e6; border-right: 1px solid #c6c6c6; border-bottom: 1px solid #c6c6c6; color: #222; }
.corner { width: 25px; }
.corner svg { margin: 1px 0 0 9px; }
td { height: 18px; padding: 1px 2px 0; overflow: hidden; white-space: nowrap; border-right: 1px solid #dcdcdc; border-bottom: 1px solid #dcdcdc; }
tbody tr:nth-child(4n + 1) td { height: 19px; }
td.num { text-align: right; }
th.sel { background: #d2d2d2; color: #217346; }
tbody th.sel { border-right-color: #217346; }
.picked { position: relative; overflow: visible; outline: 1px solid #217346; }
.picked::after { content: ""; position: absolute; right: -2px; bottom: -2px; width: 3px; height: 3px; background: #217346; }
.vscroll { width: 16px; display: flex; flex-direction: column; padding: 1px 1px 0 2px; background: #f0f0f0; }
.vscroll button, .hscroll button { flex: none; background: #fff; border: 1px solid #bbb; width: 13px; height: 13px; }
.vthumb { flex: 235; background: #fff; border: 1px solid #bbb; }
.vtrack { flex: 53; }

.sheettabs { flex: none; height: 18px; background: #e6e6e6; border-top: 1px solid #bbb; display: flex; align-items: center; padding: 0 15px 0 8px; }
.nav { width: 18px; height: 16px; }
.sheettab { align-self: stretch; margin: 0 0 1px 17px; padding: 0 6px; background: #fff; border-bottom: 1px solid #217346; color: #217346; font-weight: 700; font-size: 11px; }
.addsheet { margin-left: 20px; }
.sheettabs .dots { margin: 0 8px 0 auto; }
.hscroll { width: 377px; display: flex; background: #f0f0f0; }
.hthumb { flex: 296; background: #e6f2ec; border: 1px solid #86bf9f; }
.htrack { flex: 55; }

.status { flex: none; height: 17px; background: #f3f2f1; display: flex; align-items: center; font-size: 8px; padding: 0 5px; }
.lock { margin: 0 11px 0 14px; }
.views { margin-left: auto; display: flex; }
.views button { width: 31px; height: 17px; }
.views .on { background: #d2d0ce; }
.zb { width: 14px; font-size: 11px; color: #777; }
.zoom { width: 76px; height: 12px; background: linear-gradient(#777, #777) center / 100% 1px no-repeat; }
.zoom::-webkit-slider-thumb { appearance: none; width: 4px; height: 9px; background: #333; }
.pctlabel { margin-left: 6px; color: #777; }

.taskbar { flex: none; height: 32px; border-top: 1px solid #fff; background: #1c1c1c; color: #fff; display: flex; align-items: stretch; }
.start { width: 38px; }
.tsearch { width: 224px; background: #f2f2f2; color: #333; display: flex; align-items: center; padding: 0 3px 0 9px; gap: 8px; }
.tsearch input { flex: 1; font-size: 11px; }
.tsearch input::placeholder { color: #333; opacity: 1; }
.brand { width: 56px; height: 24px; border-radius: 4px; background: #fff; color: #e5231b; font: 900 7px/24px "Lato", sans-serif; text-align: center; }
.app { width: 39px; position: relative; }
.open::after { content: ""; position: absolute; left: 3px; right: 3px; bottom: 0; height: 2px; background: #76b9ed; }
.current { background: #4a4a4a; }
.current::after { left: 1px; right: 1px; }
.tray { margin-left: auto; display: flex; align-items: center; gap: 7px; padding-right: 12px; }
.temp { font-size: 10px; margin-right: 12px; }
.clock { display: flex; flex-direction: column; align-items: center; line-height: 14px; font-size: 9px; margin-left: 3px; }
.notif { position: relative; margin-left: 8px; width: 20px; height: 24px; justify-content: flex-start; }
.notif b { position: absolute; right: -1px; bottom: -1px; width: 15px; height: 15px; border-radius: 50%; background: #444; border: 1px solid #777; font: 700 8px/13px "Noto Sans", sans-serif; }
</style>
